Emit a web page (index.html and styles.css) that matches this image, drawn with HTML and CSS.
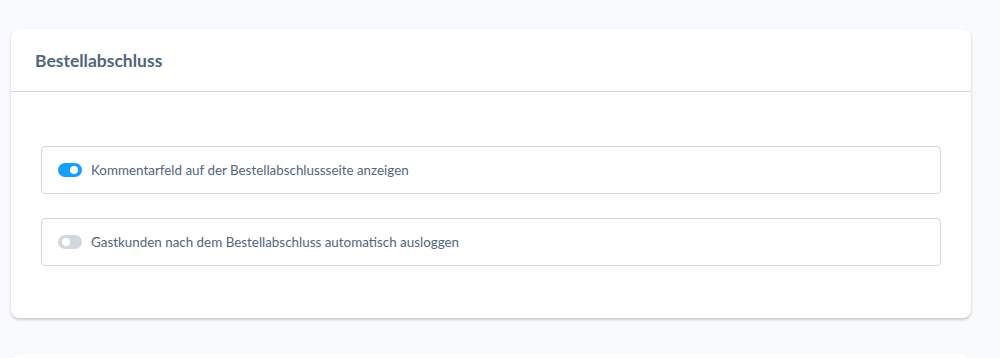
FILE: index.html
```html
<!DOCTYPE html>
<html lang="de">
<head>
  <meta charset="UTF-8">
  <title>Bestellabschluss</title>
  <link rel="stylesheet" href="styles.css">
</head>
<body>
  <div class="page">
    <div class="card">
      <div class="card-header">
        <h3 class="card-title">Bestellabschluss</h3>
      </div>
      <div class="card-body">
        <label class="field">
          <span class="switch is-on"><span class="knob"></span></span>
          <span class="field-label">Kommentarfeld auf der Bestellabschlussseite anzeigen</span>
        </label>
        <label class="field">
          <span class="switch"><span class="knob"></span></span>
          <span class="field-label">Gastkunden nach dem Bestellabschluss automatisch ausloggen</span>
        </label>
      </div>
    </div>
    <div class="card card-next"></div>
  </div>
</body>
</html>
```

FILE: styles.css
```css
html, body {
  margin: 0;
  height: 100%;
  overflow: hidden;
}
body {
  font-family: Lato, "Open Sans", sans-serif;
  background-color: #f9fafb;
  color: #52667a;
}
.page {
  height: 100%;
  box-sizing: border-box;
  padding: 29px 29px 0 11px;
  display: flex;
  flex-direction: column;
  gap: 36px;
  overflow: hidden;
}
.card {
  background-color: #fff;
  border-radius: 8px;
  box-shadow: 0 2px 3px rgba(0, 0, 0, 0.18), 0 0 1px rgba(0, 0, 0, 0.08);
  flex-shrink: 0;
}
.card-header {
  height: 63px;
  border-bottom: 1px solid #d1d9e0;
  display: flex;
  align-items: center;
  padding: 0 24px;
  box-sizing: border-box;
}
.card-title {
  margin: 0;
  font-size: 17.5px;
  font-weight: 700;
  color: #52667a;
}
.card-body {
  padding: 54px 30px 52px;
  display: flex;
  flex-direction: column;
  gap: 24px;
}
.field {
  height: 48px;
  box-sizing: border-box;
  border: 1px solid #d1d9e0;
  border-radius: 4px;
  display: flex;
  align-items: center;
  padding: 0 16px;
  gap: 9px;
}
.switch {
  width: 24px;
  height: 14px;
  border-radius: 7px;
  background-color: #d1d9e0;
  position: relative;
  flex-shrink: 0;
}
.switch .knob {
  position: absolute;
  top: 3px;
  left: 4px;
  width: 8px;
  height: 8px;
  border-radius: 50%;
  background-color: #fff;
}
.switch.is-on {
  background-color: #189eff;
}
.switch.is-on .knob {
  left: 12px;
}
.field-label {
  font-size: 13.4px;
  color: #52667a;
}
.card-next {
  height: 40px;
}
```
